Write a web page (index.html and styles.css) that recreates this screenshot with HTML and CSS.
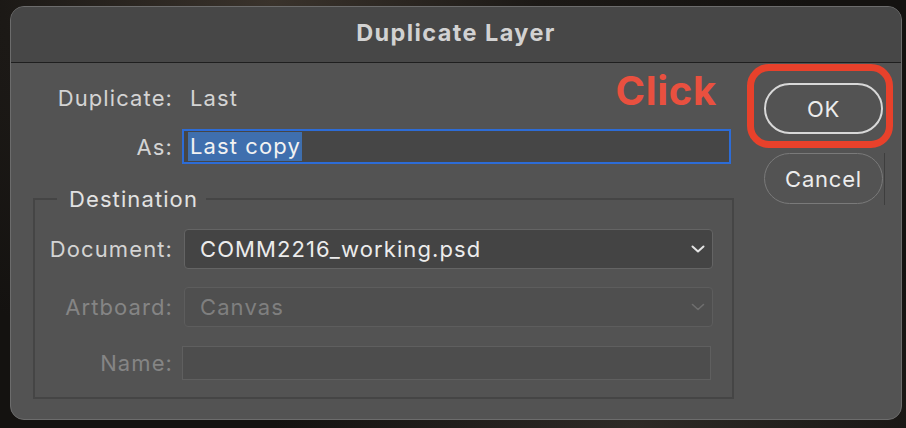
FILE: index.html
```html
<!DOCTYPE html>
<html lang="en">
<head>
<meta charset="utf-8">
<title>Duplicate Layer</title>
<link rel="stylesheet" href="styles.css">
</head>
<body>
<div class="backdrop">
  <div class="dialog">
    <div class="titlebar">Duplicate Layer</div>
    <div class="content">
      <div class="form">
        <div class="row row-dup">
          <span class="label">Duplicate:</span>
          <span class="value">Last</span>
        </div>
        <div class="row row-as">
          <span class="label">As:</span>
          <div class="text-input focused"><span class="sel">Last copy</span></div>
        </div>
        <fieldset class="group">
          <legend>Destination</legend>
          <div class="grow row-doc">
            <span class="label">Document:</span>
            <div class="select">
              <span>COMM2216_working.psd</span>
              <svg class="chev" width="14" height="8" viewBox="0 0 14 8"><path d="M1.5 1.5 L7 6.5 L12.5 1.5" fill="none" stroke="currentColor" stroke-width="2" stroke-linecap="round" stroke-linejoin="round"/></svg>
            </div>
          </div>
          <div class="grow row-art disabled">
            <span class="label">Artboard:</span>
            <div class="select">
              <span>Canvas</span>
              <svg class="chev" width="14" height="8" viewBox="0 0 14 8"><path d="M1.5 1.5 L7 6.5 L12.5 1.5" fill="none" stroke="currentColor" stroke-width="1.6" stroke-linecap="round" stroke-linejoin="round"/></svg>
            </div>
          </div>
          <div class="grow row-name disabled">
            <span class="label">Name:</span>
            <div class="name-input"></div>
          </div>
        </fieldset>
      </div>
      <div class="actions">
        <span class="note">Click</span>
        <div class="ok-wrap">
          <button class="btn btn-ok">OK</button>
          <span class="ring"></span>
        </div>
        <div class="cancel-wrap">
          <button class="btn btn-cancel">Cancel</button>
        </div>
      </div>
    </div>
  </div>
</div>
</body>
</html>
```
FILE: styles.css
```css
* { box-sizing: border-box; }
html, body {
  margin: 0;
  padding: 0;
  width: 906px;
  height: 428px;
  overflow: hidden;
}
body {
  background: #181614;
  font-family: "Inter", "Liberation Sans", sans-serif;
}
.backdrop {
  width: 906px;
  height: 428px;
  padding: 6px 4px 8px 10px;
  background:
    radial-gradient(ellipse at 30% 0%, #3a332c 0%, #1c1916 30%, transparent 60%),
    radial-gradient(ellipse at 70% 100%, #2e2a26 0%, #141210 40%),
    #141210;
}
.dialog {
  height: 414px;
  border: 1px solid #6c6c6c;
  border-radius: 14px;
  background: #535353;
  overflow: hidden;
  display: flex;
  flex-direction: column;
}
.titlebar {
  height: 56px;
  flex: none;
  background: #474747;
  border-bottom: 1px solid #1f1f1f;
  color: #d2d2d2;
  font-weight: 700;
  font-size: 23.5px;
  letter-spacing: 1.4px;
  display: flex;
  align-items: center;
  justify-content: center;
  padding-bottom: 4px;
}
.content {
  display: flex;
  flex: 1;
}
.form {
  margin-left: 22px;
  width: 701px;
  padding-top: 17px;
  flex: none;
}
.row {
  display: flex;
  align-items: center;
  height: 35px;
}
.row-as { margin-top: 14px; }
.label {
  flex: none;
  width: 140px;
  text-align: right;
  color: #d4d4d4;
  font-size: 22px;
  letter-spacing: 1.1px;
}
.value {
  margin-left: 17px;
  color: #d4d4d4;
  font-size: 22px;
  letter-spacing: 1.1px;
}
.text-input {
  margin-left: 9px;
  width: 549px;
  height: 35px;
  background: #464646;
  border: 2px solid #2d6cd6;
  display: flex;
  align-items: center;
  padding-left: 4px;
}
.sel {
  background: #3f6fae;
  color: #f2f2f2;
  font-size: 22px;
  letter-spacing: 1.1px;
  line-height: 29px;
  padding: 0 1px 0 2px;
}
.group {
  margin: 22px 0 0 0;
  padding: 17px 0 17px 0;
  border: 2px solid #454545;
  min-width: 0;
}
.group legend {
  margin-left: 22px;
  padding: 0 8px 0 12px;
  color: #e2e2e2;
  font-size: 22px;
  letter-spacing: 1.1px;
  line-height: 26px;
}
.grow {
  display: flex;
  align-items: center;
}
.grow .label { width: 138px; }
.row-art { margin-top: 18px; }
.row-name { margin-top: 19px; }
.select {
  margin-left: 11px;
  width: 529px;
  height: 40px;
  border: 1px solid #646464;
  border-radius: 4px;
  background: #444444;
  display: flex;
  align-items: center;
  justify-content: space-between;
  padding: 0 7px 0 15px;
  color: #ececec;
  font-size: 22px;
  letter-spacing: 1.1px;
}
.chev { color: #e4e4e4; }
.disabled .label { color: #858585; }
.disabled .select {
  background: #4f4f4f;
  border-color: #5d5d5d;
  color: #7f7f7f;
}
.disabled .chev { color: #6e6e6e; }
.name-input {
  margin-left: 9px;
  width: 529px;
  height: 34px;
  background: #4d4d4d;
  border: 1px solid #5f5f5f;
}
.actions {
  position: relative;
  margin-left: 30px;
  padding-top: 20px;
  width: 120px;
  flex: none;
}
.note {
  position: absolute;
  right: calc(100% + 47px);
  top: 4px;
  color: #e9503f;
  font-weight: 700;
  font-size: 40px;
  letter-spacing: 0.7px;
  line-height: 48px;
}
.ok-wrap {
  position: relative;
  width: 119px;
}
.btn {
  display: block;
  width: 119px;
  border-radius: 26px;
  background: #535353;
  color: #ececec;
  font-family: "Inter", "Liberation Sans", sans-serif;
  font-size: 22px;
  letter-spacing: 0.8px;
  padding: 0;
}
.btn-ok {
  height: 51px;
  border: 2px solid #d8d8d8;
}
.ring {
  position: absolute;
  left: -17px;
  right: -10px;
  top: -19px;
  bottom: -14px;
  border: 7px solid #e8412b;
  border-radius: 22px;
}
.cancel-wrap {
  margin-top: 19px;
  width: 121px;
  height: 52px;
  border-right: 1px solid #3e3e3e;
}
.btn-cancel {
  height: 51px;
  border: 1.5px solid #7a7a7a;
}
```
